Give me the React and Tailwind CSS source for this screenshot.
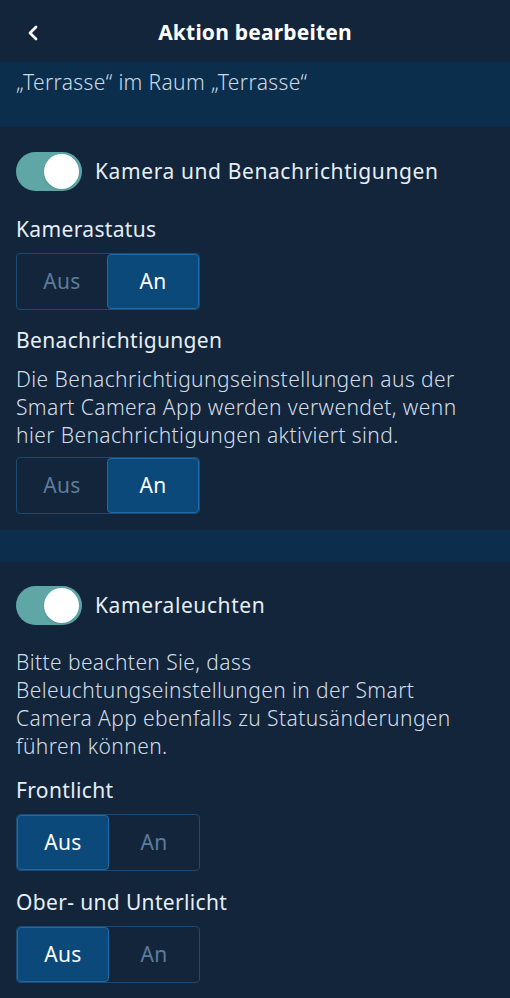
import { ChevronLeft } from 'lucide-react'

const Toggle = ({ label }) => (
  <div className="flex items-center gap-[13px]">
    <div className="relative w-[66px] h-[39px] rounded-full bg-[#5fa6a6] shrink-0">
      <div className="absolute right-[3px] top-[2px] w-[35px] h-[35px] rounded-full bg-white shadow" />
    </div>
    <span className="text-[21px] tracking-[0.6px] text-[#e6eef6]">{label}</span>
  </div>
)

const Segmented = ({ value }) => {
  const opts = ['Aus', 'An']
  return (
    <div className="flex w-[184px] h-[57px] rounded-[4px] border border-[#1b4b72] overflow-hidden">
      {opts.map((o) => (
        <div
          key={o}
          className={
            o === value
              ? 'flex-1 flex items-center justify-center bg-[#0a4979] border border-[#1f6ca8] rounded-[4px] text-[21px] tracking-[0.3px] text-white'
              : 'flex-1 flex items-center justify-center text-[21px] tracking-[0.3px] text-[#5b7d9d]'
          }
        >
          {o}
        </div>
      ))}
    </div>
  )
}

const App = () => {
  return (
    <div className="w-[510px] h-[998px] overflow-hidden bg-[#13253a] font-['Noto_Sans',sans-serif]">
      {/* header */}
      <div className="relative h-[62px] flex items-center justify-center">
        <ChevronLeft className="absolute left-[21px] top-[21px] w-[24px] h-[24px] text-white" strokeWidth={2.75} />
        <h1 className="pt-[4px] text-[21px] tracking-[0.2px] font-bold text-white">Aktion bearbeiten</h1>
      </div>

      {/* info band */}
      <div className="h-[65px] bg-[#0b2e4c] px-4 pt-[5px]">
        <p className="text-[21px] tracking-[0.35px] font-light text-[#cdd9e5]">„Terrasse“ im Raum „Terrasse“</p>
      </div>

      {/* section camera */}
      <div className="px-4 pt-[25px] pb-[16px]">
        <Toggle label="Kamera und Benachrichtigungen" />
        <h2 className="mt-[24px] mb-[10px] text-[21px] leading-[28px] tracking-[0.35px] text-[#e6eef6]">Kamerastatus</h2>
        <Segmented value="An" />
        <h2 className="mt-[16px] text-[21px] leading-[28px] tracking-[0.35px] text-[#e6eef6]">Benachrichtigungen</h2>
        <p className="mt-[11px] mb-[8px] text-[21px] leading-[28px] tracking-[0.4px] font-light text-[#d3dde8]">
          Die Benachrichtigungseinstellungen aus der Smart Camera App werden verwendet, wenn hier Benachrichtigungen aktiviert sind.
        </p>
        <Segmented value="An" />
      </div>

      <div className="h-[32px] bg-[#0c2e4c]" />

      {/* section lights */}
      <div className="px-4 pt-[24px]">
        <Toggle label="Kameraleuchten" />
        <p className="mt-[23px] text-[21px] leading-[28px] tracking-[0.4px] font-light text-[#d3dde8]">
          Bitte beachten Sie, dass Beleuchtungseinstellungen in der Smart Camera App ebenfalls zu Statusänderungen führen können.
        </p>
        <h2 className="mt-[16px] mb-[10px] text-[21px] leading-[28px] tracking-[0.35px] text-[#e6eef6]">Frontlicht</h2>
        <Segmented value="Aus" />
        <h2 className="mt-[17px] mb-[10px] text-[21px] leading-[28px] tracking-[0.35px] text-[#e6eef6]">Ober- und Unterlicht</h2>
        <Segmented value="Aus" />
      </div>
    </div>
  )
}

export default App
